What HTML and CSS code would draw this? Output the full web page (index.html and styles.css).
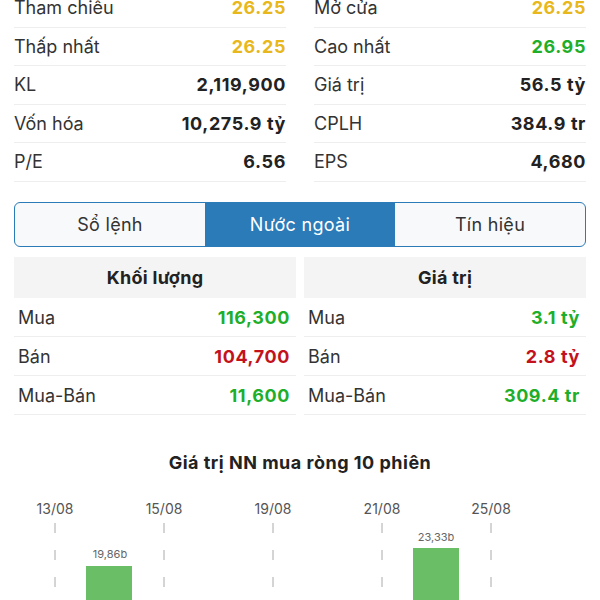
FILE: index.html
```html
<!DOCTYPE html>
<html lang="vi">
<head>
    <meta charset="UTF-8">
    <title>stock-detail</title>
    <link rel="stylesheet" href="styles.css">
</head>
<body>
<div class="info">
    <div class="col">
        <div class="row"><span class="label">Tham chiếu</span><span class="val ref">26.25</span></div>
        <div class="row"><span class="label">Thấp nhất</span><span class="val ref">26.25</span></div>
        <div class="row"><span class="label">KL</span><span class="val">2,119,900</span></div>
        <div class="row"><span class="label">Vốn hóa</span><span class="val">10,275.9 tỷ</span></div>
        <div class="row"><span class="label">P/E</span><span class="val">6.56</span></div>
    </div>
    <div class="col">
        <div class="row"><span class="label">Mở cửa</span><span class="val ref">26.25</span></div>
        <div class="row"><span class="label">Cao nhất</span><span class="val up">26.95</span></div>
        <div class="row"><span class="label">Giá trị</span><span class="val">56.5 tỷ</span></div>
        <div class="row"><span class="label">CPLH</span><span class="val">384.9 tr</span></div>
        <div class="row"><span class="label">EPS</span><span class="val">4,680</span></div>
    </div>
</div>

<div class="tabs">
    <div class="tab">Sổ lệnh</div>
    <div class="tab active">Nước ngoài</div>
    <div class="tab">Tín hiệu</div>
</div>

<div class="foreign">
    <div class="panel">
        <div class="head">Khối lượng</div>
        <div class="row"><span class="label">Mua</span><span class="val up">116,300</span></div>
        <div class="row"><span class="label">Bán</span><span class="val down">104,700</span></div>
        <div class="row"><span class="label">Mua-Bán</span><span class="val up">11,600</span></div>
    </div>
    <div class="panel">
        <div class="head">Giá trị</div>
        <div class="row"><span class="label">Mua</span><span class="val up">3.1 tỷ</span></div>
        <div class="row"><span class="label">Bán</span><span class="val down">2.8 tỷ</span></div>
        <div class="row"><span class="label">Mua-Bán</span><span class="val up">309.4 tr</span></div>
    </div>
</div>

<h3 class="chart-title">Giá trị NN mua ròng 10 phiên</h3>

<svg class="chart" width="600" height="110" viewBox="0 0 600 110">
    <g class="dates">
        <text x="55" y="23">13/08</text>
        <text x="164" y="23">15/08</text>
        <text x="273" y="23">19/08</text>
        <text x="382" y="23">21/08</text>
        <text x="491" y="23">25/08</text>
    </g>
    <g class="ticks">
        <line x1="55" y1="32" x2="55" y2="110"/>
        <line x1="164" y1="32" x2="164" y2="110"/>
        <line x1="273" y1="32" x2="273" y2="110"/>
        <line x1="382" y1="32" x2="382" y2="110"/>
        <line x1="491" y1="32" x2="491" y2="110"/>
    </g>
    <rect class="bar" x="86" y="75" width="46" height="40"/>
    <rect class="bar" x="413" y="57" width="46" height="60"/>
    <text class="bar-label" x="110" y="67">19,86b</text>
    <text class="bar-label" x="436" y="50">23,33b</text>
</svg>
</body>
</html>
```

FILE: styles.css
```css
body {
    margin: 0;
    font-family: Inter, "Noto Sans", sans-serif;
    color: #222;
    background: #fff;
    overflow: hidden;
}

.info {
    display: grid;
    grid-template-columns: 1fr 1fr;
    column-gap: 28px;
    padding: 0 14px;
    margin-top: -11px;
}

.row {
    display: flex;
    justify-content: space-between;
    align-items: center;
    height: 38.5px;
    border-bottom: 1px solid #eeeeee;
    box-sizing: border-box;
    font-size: 18px;
}

.label {
    color: #333;
}

.val {
    font-weight: 700;
    letter-spacing: 0.6px;
    color: #222;
}
.val.ref {
    color: #e8b71c;
}
.val.up {
    color: #1fae2a;
}
.val.down {
    color: #c3121c;
}

.tabs {
    display: flex;
    margin: 20px 14px 0;
    height: 45px;
    border: 1.5px solid #2a7bb8;
    border-radius: 6px;
    overflow: hidden;
    box-sizing: border-box;
    background: #f8f9fa;
}
.tab {
    flex: 1;
    display: flex;
    align-items: center;
    justify-content: center;
    font-size: 18px;
    letter-spacing: 0.3px;
    color: #333;
}
.tab.active {
    background: #2a7bb8;
    color: #fff;
}

.foreign {
    display: grid;
    grid-template-columns: 1fr 1fr;
    column-gap: 8px;
    padding: 0 14px;
    margin-top: 10px;
}
.head {
    height: 41px;
    display: flex;
    align-items: center;
    justify-content: center;
    background: #f4f4f4;
    font-size: 18px;
    font-weight: 700;
    letter-spacing: 0.3px;
}
.panel .row {
    height: 39px;
    padding: 2px 6px 0 4px;
}

.chart-title {
    margin: 37px 0 0;
    text-align: center;
    font-size: 18px;
    font-weight: 700;
    letter-spacing: 0.5px;
    line-height: 22px;
}

.chart {
    display: block;
    margin-top: 17px;
}
.dates text {
    font-size: 14px;
    fill: #555;
    text-anchor: middle;
}
.ticks line {
    stroke: #aaa;
    stroke-width: 1;
    stroke-dasharray: 10 17;
}
.bar {
    fill: #6abe66;
}
.bar-label {
    font-size: 11px;
    fill: #666;
    text-anchor: middle;
}
```
